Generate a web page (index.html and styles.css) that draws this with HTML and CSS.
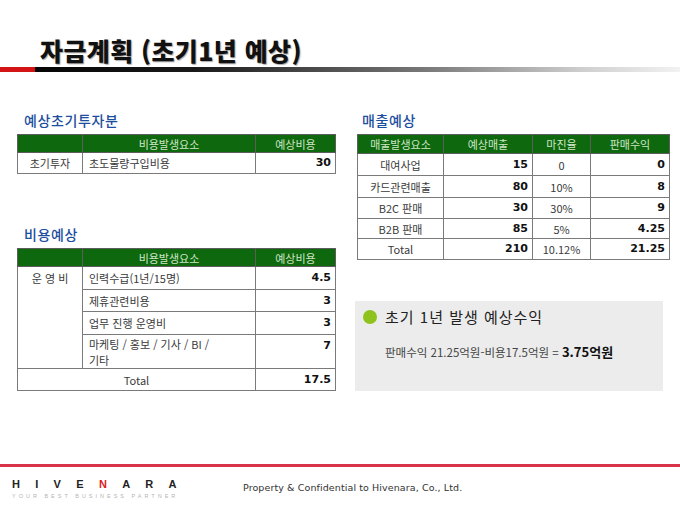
FILE: index.html
```html
<!DOCTYPE html>
<html lang="ko">
<head>
<meta charset="utf-8">
<title>자금계획 (초기1년 예상)</title>
<link rel="stylesheet" href="styles.css">
</head>
<body>
<div class="page">
  <header class="top">
    <h1 class="title">자금계획 (초기1년 예상)</h1>
    <div class="rule"><span class="rule-red"></span><span class="rule-fade"></span></div>
  </header>

  <main class="content">
    <section class="col col-left">
      <h2 class="sec-title">예상초기투자분</h2>
      <table class="grid t-left">
        <colgroup><col class="c1"><col class="c2"><col class="c3"></colgroup>
        <tr class="hdr"><th></th><th>비용발생요소</th><th>예상비용</th></tr>
        <tr class="r21"><td class="ctr">초기투자</td><td class="txt">초도물량구입비용</td><td class="num">30</td></tr>
      </table>

      <h2 class="sec-title sec-second">비용예상</h2>
      <table class="grid t-left">
        <colgroup><col class="c1"><col class="c2"><col class="c3"></colgroup>
        <tr class="hdr"><th></th><th>비용발생요소</th><th>예상비용</th></tr>
        <tr class="r23"><td class="ctr top" rowspan="4">운 영 비</td><td class="txt">인력수급(1년/15명)</td><td class="num">4.5</td></tr>
        <tr class="r22"><td class="txt">제휴관련비용</td><td class="num">3</td></tr>
        <tr class="r23"><td class="txt">업무 진행 운영비</td><td class="num">3</td></tr>
        <tr class="r34"><td class="txt top multi">마케팅 / 홍보 / 기사 / BI /<br>기타</td><td class="num top">7</td></tr>
        <tr class="r22"><td class="ctr" colspan="2">Total</td><td class="num">17.5</td></tr>
      </table>
    </section>

    <section class="col col-right">
      <h2 class="sec-title sec-right">매출예상</h2>
      <table class="grid t-right">
        <colgroup><col class="d1"><col class="d2"><col class="d3"><col class="d4"></colgroup>
        <tr class="hdr h19"><th>매출발생요소</th><th>예상매출</th><th>마진율</th><th>판매수익</th></tr>
        <tr class="r22"><td class="ctr">대여사업</td><td class="num">15</td><td class="ctr">0</td><td class="num">0</td></tr>
        <tr class="r22"><td class="ctr">카드관련매출</td><td class="num">80</td><td class="ctr">10%</td><td class="num">8</td></tr>
        <tr class="r21"><td class="ctr">B2C 판매</td><td class="num">30</td><td class="ctr">30%</td><td class="num">9</td></tr>
        <tr class="r20"><td class="ctr">B2B 판매</td><td class="num">85</td><td class="ctr">5%</td><td class="num">4.25</td></tr>
        <tr class="r21"><td class="ctr">Total</td><td class="num">210</td><td class="ctr">10.12%</td><td class="num">21.25</td></tr>
      </table>

      <div class="summary">
        <div class="sum-head"><span class="dot"></span><span class="sum-title">초기 1년 발생 예상수익</span></div>
        <p class="sum-text">판매수익 21.25억원-비용17.5억원 = <b class="sum-result">3.75억원</b></p>
      </div>
    </section>
  </main>

  <footer class="foot">
    <div class="foot-line"></div>
    <div class="foot-row">
      <div class="logo">
        <div class="logo-name">HIVE<span class="logo-n">N</span>ARA</div>
        <div class="logo-sub">YOUR BEST BUSINESS PARTNER</div>
      </div>
      <div class="foot-text">Property &amp; Confidential to Hivenara, Co., Ltd.</div>
    </div>
  </footer>
</div>
</body>
</html>
```

FILE: styles.css
```css
* { box-sizing: border-box; }
html, body { margin: 0; padding: 0; background: #fff; }
body {
  font-family: "Noto Sans CJK KR", "DejaVu Sans", sans-serif;
  color: #333;
}
.page {
  width: 680px;
  height: 510px;
  display: flex;
  flex-direction: column;
  overflow: hidden;
}

/* Title */
.top { padding-top: 35px; }
.title {
  margin: 0;
  padding-left: 40px;
  font-size: 25px;
  line-height: 30px;
  font-weight: 900;
  color: #111;
  letter-spacing: 0.4px;
  text-shadow: 1px 1px 1px #aaa;
}
.rule {
  margin-top: 2px;
  height: 5px;
  display: flex;
}
.rule-red { width: 35px; background: #d41414; }
.rule-fade {
  flex: 1;
  background: linear-gradient(to right, #050505 0%, #1a1a1a 25%, #777 60%, #cfcfcf 85%, #f2f2f2 100%);
}

/* Content */
.content {
  display: flex;
  padding-left: 17px;
}
.col-left { width: 318px; }
.col-right { width: 312px; margin-left: 22px; }

.sec-title {
  margin: 39px 0 5px 7px;
  font-size: 14px;
  line-height: 18px;
  font-weight: 500;
  color: #1d4e9e;
  letter-spacing: 0.6px;
}
.sec-second { margin-top: 51px; }
.sec-right { margin-left: 5px; }

.grid {
  border-collapse: collapse;
  table-layout: fixed;
  font-size: 11px;
  color: #3a3a3a;
}
.t-left { width: 318px; }
.t-right { width: 312px; }
.c1 { width: 65px; }
.c2 { width: 173px; }
.c3 { width: 80px; }
.d1 { width: 86px; }
.d2 { width: 89px; }
.d3 { width: 58px; }
.d4 { width: 79px; }

.grid th, .grid td {
  border: 1px solid #7a7a7a;
  padding: 0 6px;
  line-height: 14px;
}
.grid th {
  background: #0e690e;
  color: #cfe6c6;
  font-weight: 400;
  text-align: center;
  height: 18px;
  border-color: #5d5d5d;
}
.h19 th { height: 19px; }
.r20 td { height: 20px; }
.r21 td { height: 21px; }
.r22 td { height: 22px; }
.r23 td { height: 23px; }
.r34 td { height: 34px; }

.ctr { text-align: center; }
.txt { text-align: left; }
.num {
  text-align: right;
  font-family: "DejaVu Sans", "Liberation Sans", sans-serif;
  font-weight: 700;
  font-size: 11px;
  color: #111;
  padding-right: 4px !important;
}
.grid td.top { vertical-align: top; padding-top: 4px; }
.grid td.multi { line-height: 16px; padding-top: 1px; }

/* Summary */
.summary {
  margin: 41px 0 0 -2px;
  width: 308px;
  height: 90px;
  background: #ececec;
  padding: 7px 0 0 8px;
}
.sum-head { display: flex; align-items: center; gap: 8px; }
.dot {
  width: 14px;
  height: 14px;
  border-radius: 50%;
  background: #8dc31c;
}
.sum-title {
  font-size: 15px;
  line-height: 18px;
  color: #222;
  letter-spacing: 1px;
}
.sum-text {
  margin: 18px 0 0 22px;
  font-size: 11.5px;
  color: #444;
  line-height: 16px;
  letter-spacing: 0;
}
.sum-result { font-size: 13px; color: #111; font-weight: 700; }

/* Footer */
.foot { margin-top: auto; height: 46px; }
.foot-line { height: 3px; background: #d93349; }
.foot-row {
  display: flex;
  align-items: flex-start;
  padding: 11px 0 0 12px;
}
.logo { width: 231px; }
.logo-name {
  font-family: "Liberation Sans", sans-serif;
  font-weight: 700;
  font-size: 11px;
  line-height: 12px;
  letter-spacing: 15.3px;
  color: #222;
}
.logo-n { color: #e01b22; }
.logo-sub {
  margin-top: 3px;
  font-family: "Liberation Sans", sans-serif;
  font-size: 5.5px;
  line-height: 7px;
  letter-spacing: 3px;
  color: #b5b5b5;
}
.foot-text {
  margin-top: 4px;
  font-family: "DejaVu Sans", sans-serif;
  font-size: 9.5px;
  letter-spacing: 0.1px;
  color: #333;
}
```
